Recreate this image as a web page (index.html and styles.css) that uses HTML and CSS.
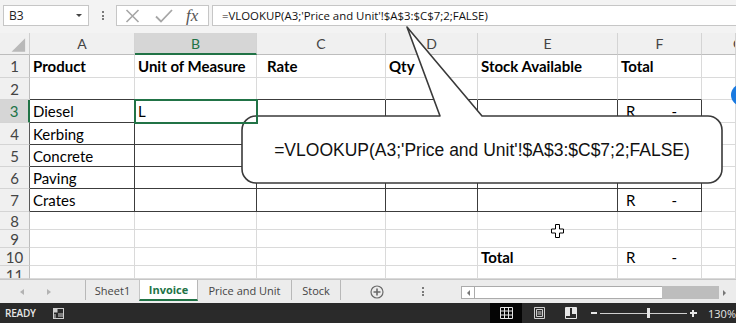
FILE: index.html
```html
<!DOCTYPE html>
<html>
<head>
<meta charset="utf-8">
<link rel="stylesheet" href="styles.css">
</head>
<body>
<div class="app">
  <div class="fbar">
    <div class="namebox"><span>B3</span><span class="caret"></span></div>
    <div class="grip"><i></i><i></i><i></i></div>
    <div class="fxbox">
      <svg class="ico-x" width="15" height="14" viewBox="0 0 15 14"><path d="M1.5 1 L13.5 13 M13.5 1 L1.5 13" stroke="#a6a6a6" stroke-width="1.6" fill="none"/></svg>
      <svg class="ico-ok" width="18" height="14" viewBox="0 0 18 14"><path d="M1 7.5 L6 12.5 L17 1" stroke="#a6a6a6" stroke-width="1.8" fill="none"/></svg>
      <span class="fx">fx</span>
    </div>
    <div class="finput">=VLOOKUP(A3;'Price and Unit'!$A$3:$C$7;2;FALSE)</div>
  </div>

  <div class="sheet">
    <!-- header row -->
    <div class="corner"><svg width="30" height="22" viewBox="0 0 30 22"><path d="M12 19 L26 19 L26 5 Z" fill="#b9b9b9"/></svg></div>
    <div class="ch">A</div><div class="ch chs">B</div><div class="ch">C</div><div class="ch">D</div><div class="ch">E</div><div class="ch">F</div><div class="ch chg">G</div>

    <!-- row 1 -->
    <div class="rh">1</div>
    <div class="c b">Product</div><div class="c b">Unit of Measure</div><div class="c b ind">Rate</div><div class="c b">Qty</div><div class="c b">Stock Available</div><div class="c b">Total</div><div class="c"></div>

    <!-- row 2 -->
    <div class="rh">2</div>
    <div class="c db"></div><div class="c db"></div><div class="c db"></div><div class="c db"></div><div class="c db"></div><div class="c db"></div><div class="c"></div>

    <!-- row 3 -->
    <div class="rh rhs rk">3</div>
    <div class="c dk">Diesel</div><div class="c dk sel">L</div><div class="c dk"></div><div class="c dk"></div><div class="c dk"></div><div class="c dk acc"><span>R</span><span>-</span></div><div class="c"></div>

    <!-- row 4 -->
    <div class="rh rk">4</div>
    <div class="c dk">Kerbing</div><div class="c dk"></div><div class="c dk"></div><div class="c dk"></div><div class="c dk"></div><div class="c dk"></div><div class="c"></div>

    <!-- row 5 -->
    <div class="rh rk">5</div>
    <div class="c dk">Concrete</div><div class="c dk"></div><div class="c dk"></div><div class="c dk"></div><div class="c dk"></div><div class="c dk"></div><div class="c"></div>

    <!-- row 6 -->
    <div class="rh rk">6</div>
    <div class="c dk">Paving</div><div class="c dk"></div><div class="c dk"></div><div class="c dk"></div><div class="c dk"></div><div class="c dk"></div><div class="c"></div>

    <!-- row 7 -->
    <div class="rh rk">7</div>
    <div class="c dk">Crates</div><div class="c dk"></div><div class="c dk"></div><div class="c dk"></div><div class="c dk"></div><div class="c dk acc"><span>R</span><span>-</span></div><div class="c"></div>

    <!-- row 8 -->
    <div class="rh">8</div>
    <div class="c"></div><div class="c"></div><div class="c"></div><div class="c"></div><div class="c"></div><div class="c"></div><div class="c"></div>

    <!-- row 9 -->
    <div class="rh">9</div>
    <div class="c"></div><div class="c"></div><div class="c"></div><div class="c"></div><div class="c"></div><div class="c"></div><div class="c"></div>

    <!-- row 10 -->
    <div class="rh">10</div>
    <div class="c"></div><div class="c"></div><div class="c"></div><div class="c"></div><div class="c b">Total</div><div class="c acc"><span>R</span><span>-</span></div><div class="c"></div>

    <!-- row 11 -->
    <div class="rh r11">11</div>
    <div class="c"></div><div class="c"></div><div class="c"></div><div class="c"></div><div class="c"></div><div class="c"></div><div class="c"></div>
  </div>

  <div class="tabbar">
    <div class="navs">
      <span class="tri-l"></span>
      <span class="tri-r"></span>
    </div>
    <div class="tab first">Sheet1</div>
    <div class="tab active">Invoice</div>
    <div class="tab">Price and Unit</div>
    <div class="tab">Stock</div>
    <div class="addsheet">
      <svg width="14" height="14" viewBox="0 0 14 14"><circle cx="7" cy="7" r="6" fill="none" stroke="#6a6a6a" stroke-width="1.2"/><path d="M7 3.5 V10.5 M3.5 7 H10.5" stroke="#6a6a6a" stroke-width="1.6"/></svg>
    </div>
    <div class="grip2"><i></i><i></i><i></i></div>
    <div class="hscroll">
      <div class="sbtn"><span class="stri-l"></span></div>
      <div class="strack"></div>
      <div class="sthumb"></div>
      <div class="sbtn2"><span class="stri-r"></span></div>
    </div>
  </div>

  <div class="status">
    <span class="ready">READY</span>
    <svg class="macro" width="11" height="11" viewBox="0 0 11 11"><rect x="0.5" y="0.5" width="10" height="10" fill="none" stroke="#cfcfcf"/><rect x="0.5" y="0.5" width="4" height="4" fill="#cfcfcf"/><path d="M5 6 H10 M5 8 H10 M2 6 V10" stroke="#cfcfcf" stroke-width="1"/></svg>
    <span class="spacer"></span>
    <div class="vbtn on"><svg width="13" height="12" viewBox="0 0 13 12"><path d="M0.5 0.5 H12.5 V11.5 H0.5 Z M0.5 4 H12.5 M0.5 8 H12.5 M4.5 0.5 V11.5 M8.5 0.5 V11.5" stroke="#e6e6e6" fill="none"/></svg></div>
    <div class="vbtn pl"><svg width="11" height="12" viewBox="0 0 11 12"><path d="M0.5 0.5 H10.5 V11.5 H0.5 Z" stroke="#cfcfcf" fill="none"/><path d="M2.5 2.5 H8.5 V9.5 H2.5 Z M3.5 5 H7.5 M3.5 7 H7.5" stroke="#cfcfcf" fill="none"/></svg></div>
    <div class="vbtn pb"><svg width="12" height="12" viewBox="0 0 12 12"><path d="M0.5 0.5 H11.5 V11.5 H0.5 Z" stroke="#e6e6e6" fill="none"/><rect x="1" y="1" width="4" height="8" fill="#e6e6e6"/><rect x="7" y="1" width="4" height="6" fill="#e6e6e6"/></svg></div>
    <div class="zminus"></div>
    <div class="slider"><span class="thumb"></span></div>
    <div class="zplus"></div>
    <span class="pct">130%</span>
  </div>

  <svg class="callout" width="736" height="323" viewBox="0 0 736 323">
    <path d="M256 116 L440 116 L407 27 L482 116 L708 116 A14 14 0 0 1 722 130 L722 169 A14 14 0 0 1 708 183 L256 183 A14 14 0 0 1 242 169 L242 130 A14 14 0 0 1 256 116 Z" fill="#ffffff" stroke="#3a3a3a" stroke-width="1.6" stroke-linejoin="round"/>
  </svg>
  <div class="callout-text">=VLOOKUP(A3;'Price and Unit'!$A$3:$C$7;2;FALSE)</div>

  <div class="bluedot"></div>
  <svg class="cursor" width="13" height="14" viewBox="0 0 13 14"><path d="M4.5 0.5 H8.5 V5 H12.5 V9 H8.5 V13.5 H4.5 V9 H0.5 V5 H4.5 Z" fill="#fff" stroke="#000" stroke-width="1"/></svg>
</div>
</body>
</html>
```

FILE: styles.css
```css
html, body {
  margin: 0;
  padding: 0;
}
.app {
  width: 736px;
  height: 323px;
  position: relative;
  overflow: hidden;
  background: #ffffff;
  font-family: Lato, "Liberation Sans", sans-serif;
}

/* formula bar */
.fbar {
  height: 33px;
  box-sizing: border-box;
  padding-top: 5px;
  background: #f3f3f3;
  display: flex;
  align-items: flex-start;
}
.namebox {
  margin-left: 3px;
  width: 86px;
  height: 21px;
  box-sizing: border-box;
  border: 1px solid #c6c6c6;
  background: #fff;
  display: flex;
  align-items: center;
  justify-content: space-between;
  padding: 0 6px 0 5px;
  font: 12px "Open Sans", sans-serif;
  color: #222;
}
.caret {
  width: 0;
  height: 0;
  border-left: 3px solid transparent;
  border-right: 3px solid transparent;
  border-top: 3px solid #444;
}
.grip {
  width: 27px;
  height: 21px;
  box-sizing: border-box;
  padding-top: 6px;
  display: flex;
  flex-direction: column;
  align-items: center;
  gap: 1.5px;
}
.grip i, .grip2 i {
  display: block;
  width: 2px;
  height: 2px;
  background: #7a7a7a;
}
.fxbox {
  width: 93px;
  height: 21px;
  box-sizing: border-box;
  border: 1px solid #c6c6c6;
  background: #fff;
  display: flex;
  align-items: center;
  padding-left: 8px;
}
.ico-ok {
  margin-left: 15px;
}
.fx {
  margin-left: 13px;
  font: italic 17px "Liberation Serif", serif;
  color: #555;
  line-height: 19px;
}
.finput {
  margin-left: 3px;
  flex: 1;
  height: 21px;
  box-sizing: border-box;
  border: 1px solid #c6c6c6;
  border-right: none;
  background: #fff;
  padding-left: 9px;
  font: 11.4px "Open Sans", sans-serif;
  line-height: 19px;
  color: #111;
  white-space: nowrap;
}

/* grid */
.sheet {
  display: grid;
  grid-template-columns: 30px 105px 122px 129px 92px 140px 84px 34px;
  grid-template-rows: 22px 23px 22px 23px 22px 22px 22px 23px 18px 18px 18px 13px;
}
.sheet > div {
  box-sizing: border-box;
  overflow: hidden;
  white-space: nowrap;
  display: flex;
  align-items: center;
}
.corner {
  background: #f0f0f0;
  border-right: 1px solid #cfcfcf;
  border-bottom: 1px solid #bdbdbd;
}
.ch {
  background: #f0f0f0;
  border-right: 1px solid #d4d4d4;
  border-bottom: 1px solid #bdbdbd;
  justify-content: center;
  color: #444;
  font-size: 14px;
}
.chs {
  background: #d6d6d6;
  color: #217346;
  border-bottom: 2px solid #217346;
  padding-top: 1px;
}
.chg {
  justify-content: flex-start;
  padding-left: 31px;
}
.rh {
  background: #f0f0f0;
  border-right: 1px solid #bdbdbd;
  border-bottom: 1px solid #d4d4d4;
  justify-content: center;
  color: #444;
  font-size: 15px;
}
.rk {
  border-right-color: #5a5a5a;
}
.rhs {
  background: #d6d6d6;
  color: #217346;
  border-right: 2px solid #217346;
}
.r11 {
  align-items: flex-start !important;
  line-height: 15px;
  padding-top: 2px;
}
.c {
  border-right: 1px solid #dadada;
  border-bottom: 1px solid #dadada;
  padding-left: 3px;
  font-size: 15px;
  color: #000;
}
.b {
  font-weight: bold;
}
.ind {
  padding-left: 10px;
}
.db {
  border-bottom-color: #3c3c3c;
}
.dk {
  border-right-color: #3c3c3c;
  border-bottom-color: #3c3c3c;
}
.acc {
  justify-content: space-between;
  padding-left: 8px;
  padding-right: 24px;
}
.sel {
  outline: 2px solid #217346;
  outline-offset: -1px;
  position: relative;
  z-index: 1;
}

/* tab bar */
.tabbar {
  height: 24px;
  box-sizing: border-box;
  border-top: 1px solid #c6c6c6;
  background: #ececec;
  display: flex;
  align-items: flex-start;
  font: 11px "Open Sans", sans-serif;
  color: #444;
}
.navs {
  width: 85px;
  height: 23px;
  display: flex;
  align-items: center;
  padding-left: 20px;
  box-sizing: border-box;
  gap: 23px;
}
.tri-l, .tri-r {
  width: 0;
  height: 0;
  border-top: 3px solid transparent;
  border-bottom: 3px solid transparent;
}
.tri-l { border-right: 4px solid #b3b3b3; }
.tri-r { border-left: 4px solid #b3b3b3; }
.tab {
  height: 20px;
  display: flex;
  align-items: center;
  justify-content: center;
  box-sizing: border-box;
  border-right: 1px solid #b8b8b8;
}
.tab.first {
  border-left: 1px solid #b8b8b8;
  width: 55px;
}
.tab.active {
  width: 59px;
  height: 21px;
  background: #fff;
  color: #217346;
  font-weight: bold;
  border-bottom: 2px solid #217346;
  border-left: 1px solid #c6c6c6;
  margin-left: -1px;
}
.tab:nth-child(4) { width: 94px; }
.tab:nth-child(5) { width: 49px; }
.addsheet {
  width: 44px;
  height: 23px;
  display: flex;
  align-items: center;
  justify-content: flex-end;
  padding-right: 1px;
  box-sizing: border-box;
}
.grip2 {
  width: 76px;
  height: 23px;
  display: flex;
  flex-direction: column;
  align-items: center;
  justify-content: center;
  gap: 1.5px;
}
.hscroll {
  flex: 1;
  height: 13px;
  margin-top: 6px;
  display: flex;
  box-sizing: border-box;
}
.sbtn {
  width: 14px;
  height: 13px;
  box-sizing: border-box;
  border: 1px solid #ababab;
  background: #fff;
  display: flex;
  align-items: center;
  justify-content: center;
}
.strack {
  width: 187px;
  height: 13px;
  box-sizing: border-box;
  border-top: 1px solid #ababab;
  border-bottom: 1px solid #ababab;
  background: #fff;
}
.sthumb {
  width: 57px;
  height: 13px;
  background: #bdbdbd;
}
.sbtn2 {
  flex: 1;
  height: 13px;
  display: flex;
  align-items: center;
  padding-left: 4px;
  background: #ececec;
}
.stri-l, .stri-r {
  width: 0;
  height: 0;
  border-top: 3px solid transparent;
  border-bottom: 3px solid transparent;
}
.stri-l { border-right: 3px solid #777; }
.stri-r { border-left: 3px solid #777; }

/* status bar */
.status {
  height: 20px;
  background: #2a2a2a;
  display: flex;
  align-items: center;
  font: 10px "Open Sans", sans-serif;
  color: #e6e6e6;
}
.ready {
  margin-left: 5px;
  font-weight: 600;
  letter-spacing: -0.2px;
}
.macro {
  margin-left: 17px;
}
.spacer {
  flex: 1;
}
.vbtn {
  height: 20px;
  display: flex;
  align-items: center;
  justify-content: center;
}
.vbtn.on {
  width: 32px;
  background: #050505;
}
.vbtn.pl { width: 34px; }
.vbtn.pb { width: 30px; }
.zminus {
  width: 12px;
  height: 20px;
  background: linear-gradient(#e6e6e6, #e6e6e6) center / 6px 2px no-repeat;
  margin-left: 2px;
}
.slider {
  width: 87px;
  height: 20px;
  background: linear-gradient(#cfcfcf, #cfcfcf) center / 100% 1px no-repeat;
  display: flex;
  align-items: center;
}
.thumb {
  margin-left: 47px;
  width: 3px;
  height: 10px;
  background: #e6e6e6;
}
.zplus {
  width: 12px;
  height: 20px;
  background:
    linear-gradient(#e6e6e6, #e6e6e6) center / 7px 2px no-repeat,
    linear-gradient(#e6e6e6, #e6e6e6) center / 2px 7px no-repeat;
}
.pct {
  margin-left: 9px;
  font-size: 11px;
  white-space: nowrap;
}

/* overlays */
.callout {
  position: absolute;
  left: 0;
  top: 0;
  pointer-events: none;
}
.callout-text {
  position: absolute;
  left: 242px;
  top: 116px;
  width: 480px;
  height: 67px;
  display: flex;
  align-items: center;
  justify-content: center;
  font: 17.5px "Liberation Sans", Arial, sans-serif;
  color: #111;
  white-space: nowrap;
  padding-top: 1px;
  box-sizing: border-box;
}
.bluedot {
  position: absolute;
  left: 731px;
  top: 84px;
  width: 22px;
  height: 22px;
  border-radius: 50%;
  background: #1a7ae0;
}
.cursor {
  position: absolute;
  left: 551px;
  top: 224px;
}
```
